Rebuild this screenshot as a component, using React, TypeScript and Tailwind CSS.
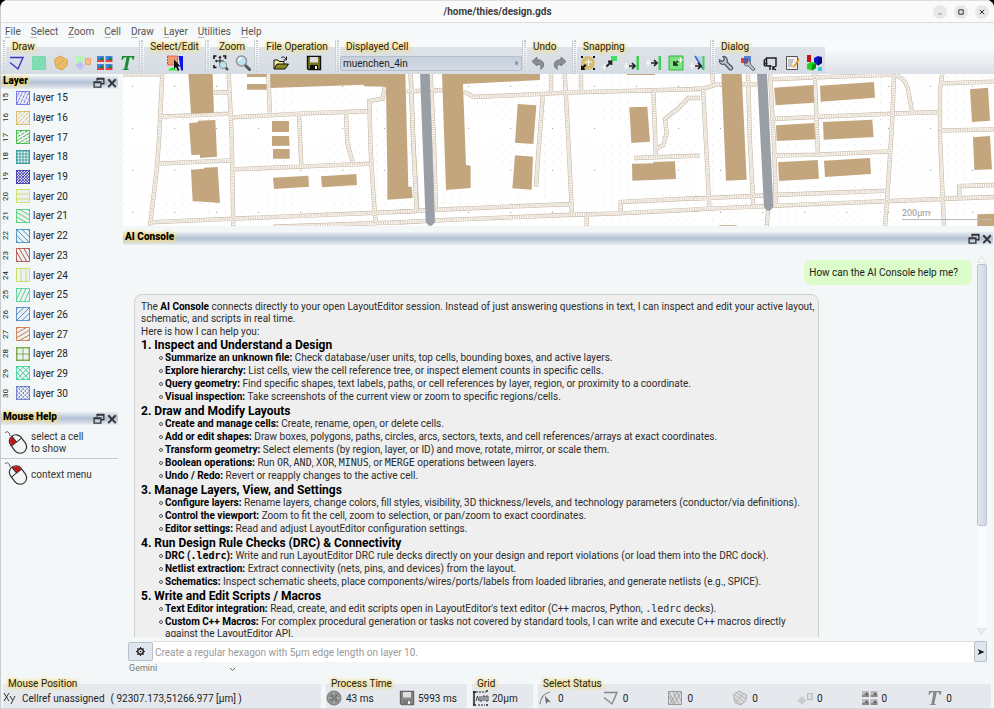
import React from "react";

type Kids = { children?: React.ReactNode };

const GLOW =
  "[text-shadow:0_0_3px_#f5dc82,0_0_4px_#f5dc82,0_0_5px_#f7e6a6,1px_1px_4px_#f5dc82]";

/* ---------- small building blocks ---------- */

function Icon({ children, size = 16 }: Kids & { size?: number }) {
  return (
    <svg width={size} height={size} viewBox="0 0 16 16" fill="none" aria-hidden="true" className="shrink-0">
      {children}
    </svg>
  );
}

function Tool({ label, children, wide = false }: Kids & { label: string; wide?: boolean }) {
  return (
    <button
      type="button"
      aria-label={label}
      className={(wide ? "w-[33px]" : "w-[22px]") + " flex h-[20px] shrink-0 items-center justify-center"}
    >
      {children}
    </button>
  );
}

function ToolGroup({ title, className, center = false, first = false, children }: Kids & { title: string; className: string; center?: boolean; first?: boolean }) {
  return (
    <section className={"flex h-[34px] shrink-0 " + (first ? "pl-[2px] " : "border-l border-[#cdd2d6] pl-[1px] ") + className}>
      <div className="mr-[1px] w-[2px] shrink-0 border-x border-dotted border-[#c5cacf]" />
      <div className="w-full rounded-t-[3px] bg-linear-to-b from-transparent from-[7px] via-[#dde3e8] via-[7px] to-[#d6dce3]">
        <h2 className={"h-[13px] px-[6px] text-[10px] leading-[13px] whitespace-nowrap text-[#222] " + (center ? "text-center " : "") + GLOW}>{title}</h2>
        <div className={"flex h-[20px] " + (center ? "justify-center" : "")}>{children}</div>
      </div>
    </section>
  );
}

function DockHeader({ title }: { title: string }) {
  return (
    <header className="flex h-[13px] shrink-0 items-center justify-between bg-linear-to-b from-[#e9eef3] via-[#b3c1d4] to-[#e9eef3] pl-[2px]">
      <h2 className={"-mt-[4px] text-[10px] leading-[13px] font-black text-black " + GLOW}>{title}</h2>
      <div className="flex gap-[1px]">
        <button type="button" aria-label={"Float " + title} className="h-[12px] w-[12px]">
          <Icon size={12}>
            <path d="M5.500 5V2h9v7h-3M5 2.600h9.500M1.500 6.500h9v7h-9zM1 7.500h9.500" stroke="#333" strokeWidth="1.800" />
          </Icon>
        </button>
        <button type="button" aria-label={"Close " + title} className="h-[12px] w-[12px]">
          <Icon size={12}>
            <path d="M3 3l10 10.500M13 3L3 13.500" stroke="#333" strokeWidth="2.600" />
          </Icon>
        </button>
      </div>
    </header>
  );
}

/* ---------- toolbar drawings ---------- */

const Folder = () => (
  <Icon>
    <path d="M1 14V5h4l1 1.500h5V9" fill="#f5f0a0" stroke="#111" />
    <path d="M1 14L4 9h11.500l-3.500 5z" fill="#8a8a22" stroke="#111" />
    <path d="M8 3c2-2 4-1 5 1.500M13.500 1.500v3.500h-3" stroke="#111" />
  </Icon>
);

const Disk = ({ gray = false }: { gray?: boolean }) => (
  <Icon>
    <path d="M1.500 1.500h13v13h-12l-1-1z" fill={gray ? "#888" : "#77771c"} stroke={gray ? "#666" : "#111"} strokeWidth="1.400" />
    <path d="M4 2h8v5.500H4z" fill={gray ? "#ddd" : "#dcdcdc"} />
    <path d="M4 10h8v4.500H4z" fill={gray ? "#777" : "#111"} />
    <path d="M9 11h2v3H9z" fill="#eee" />
  </Icon>
);

const Lens = () => (
  <Icon>
    <path d="M10 10l4.500 4.500" stroke="#555" strokeWidth="3" strokeLinecap="round" />
    <circle cx="6.500" cy="6" r="5" fill="#bfe3f3" stroke="#8b969c" strokeWidth="1.500" />
    <path d="M3.500 6a3 3 0 013-3" stroke="#fff" strokeWidth="1.500" />
  </Icon>
);

const ZoomArea = () => (
  <Icon>
    <path d="M1 4V1h2.500M10 1h2.500v3M1 10v2.500h2.500" stroke="#111" strokeWidth="1.600" />
    <path d="M7 2v7M3 6h8" stroke="#222" strokeWidth="1.200" />
    <path d="M7 .5L5.200 3h3.600zM1.500 6L4 4.500v3z" fill="#222" />
    <path d="M12 12l3 3" stroke="#555" strokeWidth="2.500" />
    <circle cx="10" cy="10" r="3.600" fill="#bfe3f3" stroke="#8b969c" />
  </Icon>
);

const Select = () => (
  <Icon>
    <path d="M.5 1h10v9H.5z" fill="#f29a70" stroke="#f33" strokeDasharray="2 1" />
    <path d="M1 15.500q4-6 9 0z" fill="#2e3" />
    <path d="M11.500 1H16v14.500h-2z" fill="#11e" />
    <path d="M7 4.500v9.500l2-2 1.800 4 1.700-.8-1.800-3.700h3z" fill="#111" />
  </Icon>
);

const Undo = ({ flip = false }: { flip?: boolean }) => (
  <Icon>
    <g transform={flip ? "matrix(-1 0 0 1 16 0)" : undefined}>
      <path d="M2 6.500L7 2v2.700c4.500 0 7 2.300 6.700 5.300-.2 2-1.200 3.300-3.200 4.300 1-2.800.5-4.800-3.500-4.800V11z" fill="#8c8f92" stroke="#6a6d70" strokeWidth=".8" />
    </g>
  </Icon>
);

const Wrench = ({ badge = false }: { badge?: boolean }) => (
  <Icon>
    {badge && <path d="M1 3h6v5H1z" fill="#e33" />}
    {badge && <path d="M4 1h7v6H4z" fill="#36c" opacity=".8" />}
    <g transform={badge ? "translate(3 3.500) scale(.8)" : undefined}>
      <path d="M5 1.500l1.500 3-2 2-3-1.500C1 8.500 4 10 6.500 9l5 5.500c2 1.500 4-.8 2.700-2.500L9 7c1-3-1-6-4-5.500z" fill="#c4c8d4" stroke="#4c4f5c" strokeWidth="1.200" />
    </g>
  </Icon>
);

const Chip = () => (
  <Icon>
    <path d="M4.500 4C2.500 4 1.500 6 2.500 8c-1 1.500 0 3 1.500 3M4.500 11V3h9.500v8.500M2 8.500h3.500M8 11v-1M8 15v-4h1.500M11 15v-4M14 15l-3-2 3-2M4.500 11H8" stroke="#222" strokeWidth="1.500" />
  </Icon>
);

const Note = () => (
  <Icon>
    <path d="M2.500 1.500h11v13h-11z" fill="#f2f2ee" stroke="#555" />
    <path d="M4 5h6M4 7h5M4 9h4M4 11h5" stroke="#999" />
    <path d="M15 3l-5 7-1 3 2.500-1.500 4-6.500z" fill="#f39a1f" />
  </Icon>
);

const Cubes = () => (
  <Icon>
    <path d="M1 0h4v7H1z" fill="#c11" />
    <path d="M8 3l4-2 4 1v6l-4 2.500L8 8z" fill="#1212c8" />
    <path d="M12 4.500L16 2v6l-4 2.500z" fill="#08087a" />
    <path d="M1 9l4-2 5 1v5l-4 2.500L1 14z" fill="#1fd41f" />
    <path d="M6 10l4-2v5l-4 2.500z" fill="#0a8a0a" />
    <path d="M12 12h4v4h-4z" fill="#3cd" />
  </Icon>
);

const Snap = ({ kind }: { kind: number }) => (
  <Icon>
    {kind === 0 && <circle cx="8" cy="8" r="7" fill="#d2bd72" />}
    {kind === 0 && <path d="M1 1h2v2H1zM13 1h2v2h-2zM13 13h2v2h-2zM1 15v-5l1.500 1.500L5 9l1.500 1.500L4 13l1.500 2z" fill="#111" />}
    {kind === 0 && <path d="M5 7h7M8.500 4v7" stroke="#fff" />}
    {kind === 1 && <path d="M9 1h6v5H9z" fill="#4d6" />}
    {kind === 1 && <path d="M4 12l5-5M6 6.500h3.500V10" stroke="#222" strokeWidth="1.800" />}
    {kind === 1 && <path d="M0 12h5M2.500 9v6" stroke="#fff" />}
    {(kind === 2 || kind === 3) && <path d="M12.500 1h2.500v14h-2.500z" fill="#3dcf55" />}
    {kind === 2 && <path d="M5 11h6M8 8l3 3-3 3" stroke="#222" strokeWidth="1.700" />}
    {kind === 2 && <path d="M0 11h5M2 8v6" stroke="#fff" />}
    {kind === 3 && <path d="M5 8h6M8 5l3 3-3 3" stroke="#222" strokeWidth="1.700" />}
    {kind === 3 && <path d="M0 8h5M2 5v6" stroke="#fff" />}
    {kind === 4 && <path d="M1 1h14v14H1z" fill="#7be37f" stroke="#34b545" />}
    {kind === 4 && <path d="M10 6l-3.500 3.500M6 6v4h4" stroke="#222" strokeWidth="1.700" />}
    {kind === 4 && <path d="M10 5h5M12.500 2.500v5" stroke="#fff" />}
    {kind === 5 && <path d="M5 1h7v12z" fill="#b9d3ee" />}
    {kind === 5 && <path d="M5 1l8 13" stroke="#36c" strokeWidth="1.500" />}
    {kind === 5 && <path d="M12.500 1h2v14h-2z" fill="#3dcf55" />}
    {kind === 5 && <path d="M5 11h6M8 8l3 3-3 3" stroke="#222" strokeWidth="1.700" />}
    {kind === 5 && <path d="M0 11h5M2 8v6" stroke="#fff" />}
  </Icon>
);

const DrawIcon = ({ kind, gray = false }: { kind: number; gray?: boolean }) => (
  <Icon>
    {kind === 0 && <path d="M1 7.500l8 6.500L14 2.500H1" stroke={gray ? "#888" : "#3a34c8"} strokeWidth="1.400" />}
    {kind === 1 && <path d="M1.500 1.500h13v13h-13z" fill={gray ? "#ddd" : "#8be0b8"} stroke={gray ? "#999" : "#78d8ac"} />}
    {kind === 1 && <path d="M2 6l4 8M2 2l6 12M6 2l6 12M10 2l4 9M14 2L7 14M10 2L3 14" stroke={gray ? "#999" : "#6fd4a6"} strokeWidth=".8" />}
    {kind === 2 && <path d="M1.500 4.500L7 1l7.500 4-.5 5.500L9 15l-6-2.500z" fill={gray ? "#ddd" : "#efc06c"} stroke={gray ? "#aaa" : "#d9a04a"} />}
    {kind === 2 && <path d="M3 5l9 7M5 3l9 6M3 9l7 5M12 3L4 12" stroke={gray ? "#aaa" : "#dda654"} strokeWidth=".8" />}
    {kind === 3 && !gray && <path d="M1 1h8v8H1z" fill="#b9f5b5" />}
    {kind === 3 && <path d="M5 6l4.500 4.500L5 15 .5 10.500z" fill={gray ? "#ccc" : "#c2c0f5"} />}
    {kind === 3 && <path d="M10.500 3.500h5v6h-5z" fill={gray ? "#ddd" : "#f6bd8d"} stroke={gray ? "#bbb" : "#eaa56c"} />}
    {kind === 4 &&
      [0, 8.5].map((x) =>
        [1, 9].map((y) => (
          <g key={x + "-" + y}>
            <path d={`M${x} ${y}h7v4H${x}z`} fill={gray ? "#bbb" : "#3f86d8"} />
            <path d={`M${x + 2.5} ${y + 4}l2-3 2.500 3z`} fill={gray ? "#666" : "#157a35"} />
            <path d={`M${x} ${y + 5}h7`} stroke={gray ? "#888" : "#e04040"} strokeWidth="2" />
          </g>
        )),
      )}
    {kind === 5 && (
      <path
        d="M3 1h12.500l-.8 4h-1c0-2-.7-2.700-3-2.700L8.500 13c-.1 1 .3 1.300 1.500 1.400V15H3.500v-.6c1.300-.1 1.800-.4 2-1.400L7.500 2.300C5 2.300 4.300 3 3.500 5h-1z"
        fill={gray ? "#888" : "#1e8a35"}
      />
    )}
  </Icon>
);

/* ---------- layer list ---------- */

type Layer = { n: number; color: string; a: number; b?: number; gap: number; dash?: string };

const LAYERS: Layer[] = [
  { n: 15, color: "#5b5be0", a: 25, gap: 3, dash: "3 1" },
  { n: 16, color: "#d3b04b", a: 45, gap: 3, dash: "3 1" },
  { n: 17, color: "#27b02c", a: 60, gap: 3, dash: "3 1" },
  { n: 18, color: "#2a9797", a: 0, b: 90, gap: 3 },
  { n: 19, color: "#3a2fae", a: 45, b: 135, gap: 2 },
  { n: 20, color: "#cbd84a", a: 90, gap: 5 },
  { n: 21, color: "#3ecb62", a: 120, gap: 4 },
  { n: 22, color: "#2a86b8", a: 135, gap: 4 },
  { n: 23, color: "#a8423a", a: 150, gap: 4 },
  { n: 24, color: "#bddc4f", a: 0, gap: 5 },
  { n: 25, color: "#43cf8a", a: 25, gap: 4 },
  { n: 26, color: "#3a7bc4", a: 45, gap: 4 },
  { n: 27, color: "#c46a3c", a: 60, gap: 4 },
  { n: 28, color: "#6ba13a", a: 0, b: 90, gap: 6 },
  { n: 29, color: "#2fcf92", a: 45, b: 135, gap: 4 },
  { n: 30, color: "#5468c8", a: 45, b: 135, gap: 3, dash: "2 1" },
];

function Swatch({ layer }: { layer: Layer }) {
  const angles = layer.b === undefined ? [layer.a] : [layer.a, layer.b];
  const offsets: number[] = [];
  for (let o = -12; o <= 12; o += layer.gap) offsets.push(o);
  return (
    <svg width="14" height="14" viewBox="0 0 14 14" aria-hidden="true" className="shrink-0 overflow-hidden bg-[#eef1f2]">
      {angles.map((angle) => (
        <g key={angle} transform={`rotate(${angle} 7 7)`} stroke={layer.color} strokeWidth=".8" strokeDasharray={layer.dash}>
          {offsets.map((o) => (
            <path key={o} d={`M${7 + o} -4V18`} />
          ))}
        </g>
      ))}
      <rect x=".5" y=".5" width="13" height="13" fill="none" stroke={layer.color} strokeOpacity=".75" />
    </svg>
  );
}

function Mouse({ right = false }: { right?: boolean }) {
  return (
    <svg width="26" height="26" viewBox="0 0 26 26" fill="none" aria-hidden="true" className="shrink-0">
      <path d="M1 3c2-3 5 0 5 3" stroke="#555" />
      <g transform="rotate(-38 14 14)">
        <rect x="7.500" y="4" width="13" height="20" rx="6.500" fill="#f4f4f4" stroke="#333" strokeWidth="1.200" />
        {right ? (
          <path d="M14 4.500c4 0 6 3 6 7h-6z" fill="#c81414" />
        ) : (
          <path d="M14 4.500c-4 0-6 3-6 7h6z" fill="#c81414" />
        )}
        <path d="M7.500 11.500h13M14 4v7.500" stroke="#333" />
      </g>
    </svg>
  );
}

/* ---------- layout canvas ---------- */

const ROADS_LEFT = [
  "M0 13H130",
  "M127 10L117 210L110 300L90 470",
  "M122 140L330 131",
  "M326 10L335 200L340 470",
  "M282 68L332 66",
  "M445 10L450 135",
  "M335 142L560 130L752 123",
  "M537 132L544 292",
  "M678 125L682 220L700 284",
  "M115 281L335 271",
  "M340 298L560 289L755 281",
  "M795 50L788 86L748 93L752 240L762 400L768 465",
  "M90 457L340 446L560 437L890 423",
  "M460 470L900 455",
  "M872 10L880 220L892 423",
];

const ROADS_MID = [
  "M32 10L40 220L50 425",
  "M92 10L102 220L108 422",
  "M20 64L130 60",
  "M192 65L222 81L380 74L520 67L900 57",
  "M453 10V70M543 10V64M494 10L504 190L516 435",
  "M428 80L415 250L408 350",
  "M0 425L160 417L516 402",
  "M0 457L160 449L500 435L660 430L900 418",
  "M560 430V470",
  "M662 430V396L900 384",
  "M760 60L768 262",
  "M900 84H865L832 118L795 146L800 190L790 225L766 238",
  "M702 264L900 257",
];

const ROADS_RIGHT = [
  "M55 10L57 40M0 57L30 55L70 43L190 43",
  "M27 57L38 255L46 412",
  "M162 10L168 220L178 410",
  "M228 10L240 220L246 408",
  "M230 28L370 22L600 14",
  "M362 10L372 255",
  "M236 147L400 139L598 131L740 126",
  "M242 257L372 254L590 244",
  "M600 12L595 150L582 350L573 470",
  "M602 14Q640 25 645 75L654 126",
  "M745 10L738 60L738 200L750 470",
  "M745 40L900 35",
  "M735 182L900 178",
  "M0 386L240 375L580 362",
  "M0 418L180 410L420 400L740 387L900 381",
  "M796 386V348L900 345",
  "M222 420L218 470",
];

function Roads({ x, paths }: { x: number; paths: string[] }) {
  const d = paths.join("");
  return (
    <g transform={`translate(${x} 70) scale(.33333)`} fill="none">
      <path d={d} stroke="#c9bba8" strokeWidth="13" />
      <path d={d} stroke="#fbf8f4" strokeWidth="9" />
      <path d={d} stroke="#c3b299" strokeWidth="7" strokeDasharray="3 4" opacity=".6" />
    </g>
  );
}

function Canvas() {
  return (
    <div className="h-[152px] shrink-0 overflow-hidden bg-white">
      <svg className="block h-full w-full" viewBox="123 74 871 152" preserveAspectRatio="xMinYMin slice" role="img" aria-label="Layout view">
        <defs>
          <pattern id="grid" x="124" y="77" width="8.400" height="8.400" patternUnits="userSpaceOnUse">
            <rect width="1" height="1" fill="#dcdcdc" />
          </pattern>
          <pattern id="gridMajor" x="132" y="86" width="42" height="42" patternUnits="userSpaceOnUse">
            <rect width="1" height="1" fill="#a5a5a5" />
          </pattern>
        </defs>
        <rect x="123" y="74" width="871" height="152" fill="url(#grid)" />
        <rect x="123" y="74" width="871" height="152" fill="url(#gridMajor)" />
        <Roads x={120} paths={ROADS_LEFT} />
        <Roads x={400} paths={ROADS_MID} />
        <Roads x={694} paths={ROADS_RIGHT} />
        <g fill="#c4a67e">
          <path
            transform="translate(120 70) scale(.33333)"
            d="M205 10H278L282 128L213 131ZM207 160L234 157V152L286 150L291 260L240 264V254L214 255ZM213 299L252 296V293L293 291L300 399L262 396L218 394ZM381 10H440V21H381ZM381 42H440V59H381ZM450 10H856L865 350H875L878 384L802 389V318L798 50L732 49L730 44L452 54ZM456 153H507V186H456ZM456 198H507L509 227L456 228ZM459 237H509V266H459ZM459 323L565 317L567 350L462 357ZM603 319L709 312L711 345L606 352Z"
          />
          <path
            transform="translate(400 70) scale(.33333)"
            d="M126 10H420V30L189 42L198 285L212 287V354L138 360ZM353 102L409 106L400 222L345 218ZM345 256L399 260L395 359L337 355ZM681 10H765V15H681ZM688 112L742 110L750 215L694 219ZM696 281L760 280V276L825 274L828 327L697 332Z"
          />
          <path
            transform="translate(694 70) scale(.33333)"
            d="M82 10H143L158 329L96 332ZM240 53L358 45L361 98L245 106ZM378 47L540 36L543 83L380 95ZM246 166L361 159L364 208L248 213ZM387 156L535 149L539 201L389 209ZM252 277L371 270L375 326L255 333ZM390 272L528 264L531 312L393 321ZM828 58L882 53L888 152L834 156ZM837 202L888 198L894 298L841 300ZM850 433L905 431V470H850ZM76 466H128V470H76Z"
          />
        </g>
        <g fill="#9a9fa6">
          <path transform="translate(400 70) scale(.33333)" d="M60 10H89L105 455Q91 480 77 455Z" />
          <path transform="translate(694 70) scale(.33333)" d="M189 10H219L238 410Q223 435 210 410Z" />
        </g>
        <text x="902" y="216" fontSize="9" fill="#999" fontFamily="Roboto, sans-serif">
          200µm
        </text>
        <path d="M902 219.500h90" stroke="#bbb" />
      </svg>
    </div>
  );
}

/* ---------- AI answer ---------- */

const Mono = ({ children }: Kids) => <code className="font-['DejaVu_Sans_Mono',monospace] text-[10px] leading-none">{children}</code>;

const SECTIONS: { title: string; items: [React.ReactNode, React.ReactNode][] }[] = [
  {
    title: "1. Inspect and Understand a Design",
    items: [
      ["Summarize an unknown file:", "Check database/user units, top cells, bounding boxes, and active layers."],
      ["Explore hierarchy:", "List cells, view the cell reference tree, or inspect element counts in specific cells."],
      ["Query geometry:", "Find specific shapes, text labels, paths, or cell references by layer, region, or proximity to a coordinate."],
      ["Visual inspection:", "Take screenshots of the current view or zoom to specific regions/cells."],
    ],
  },
  {
    title: "2. Draw and Modify Layouts",
    items: [
      ["Create and manage cells:", "Create, rename, open, or delete cells."],
      ["Add or edit shapes:", "Draw boxes, polygons, paths, circles, arcs, sectors, texts, and cell references/arrays at exact coordinates."],
      ["Transform geometry:", "Select elements (by region, layer, or ID) and move, rotate, mirror, or scale them."],
      [
        "Boolean operations:",
        <>
          Run <Mono>OR</Mono>, <Mono>AND</Mono>, <Mono>XOR</Mono>, <Mono>MINUS</Mono>, or <Mono>MERGE</Mono> operations between layers.
        </>,
      ],
      ["Undo / Redo:", "Revert or reapply changes to the active cell."],
    ],
  },
  {
    title: "3. Manage Layers, View, and Settings",
    items: [
      ["Configure layers:", "Rename layers, change colors, fill styles, visibility, 3D thickness/levels, and technology parameters (conductor/via definitions)."],
      ["Control the viewport:", "Zoom to fit the cell, zoom to selection, or pan/zoom to exact coordinates."],
      ["Editor settings:", "Read and adjust LayoutEditor configuration settings."],
    ],
  },
  {
    title: "4. Run Design Rule Checks (DRC) & Connectivity",
    items: [
      [
        <>
          DRC (<Mono>.ledrc</Mono>):
        </>,
        "Write and run LayoutEditor DRC rule decks directly on your design and report violations (or load them into the DRC dock).",
      ],
      ["Netlist extraction:", "Extract connectivity (nets, pins, and devices) from the layout."],
      ["Schematics:", "Inspect schematic sheets, place components/wires/ports/labels from loaded libraries, and generate netlists (e.g., SPICE)."],
    ],
  },
  {
    title: "5. Write and Edit Scripts / Macros",
    items: [
      [
        "Text Editor integration:",
        <>
          Read, create, and edit scripts open in LayoutEditor's text editor (C++ macros, Python, <Mono>.ledrc</Mono> decks).
        </>,
      ],
      [
        "Custom C++ Macros:",
        <>
          For complex procedural generation or tasks not covered by standard tools, I can write and execute C++ macros directly
          <br />
          against the LayoutEditor API.
        </>,
      ],
    ],
  },
];

function Answer() {
  return (
    <article className="ml-[11px] w-[685px] shrink-0 rounded-t-[8px] border border-[#cfcfcf] bg-[#efefef] px-[6px] pt-[6px] text-[10px] whitespace-nowrap text-[#2c2c2c]">
      <p className="leading-[12px]">
        The <b className="text-black">AI Console</b> connects directly to your open LayoutEditor session. Instead of just answering questions in text, I can inspect and edit your active layout,
        <br />
        schematic, and scripts in real time.
      </p>
      <p className="leading-[13px]">Here is how I can help you:</p>
      {SECTIONS.map((s) => (
        <section key={s.title}>
          <h3 className="text-[12px] leading-[14px] font-bold text-black">{s.title}</h3>
          <ul>
            {s.items.map(([head, text], i) => (
              <li key={i} className="flex gap-[2px] pb-px pl-[18px] leading-[12px]">
                <span className="mt-[4px] h-[4px] w-[4px] shrink-0 rounded-full border border-[#555]" />
                <p>
                  <b className="text-black">{head}</b> {text}
                </p>
              </li>
            ))}
          </ul>
        </section>
      ))}
    </article>
  );
}

/* ---------- status bar ---------- */

function StatusGroup({ title, className, children }: Kids & { title: string; className: string }) {
  return (
    <section className={"h-[30px] rounded-[3px] bg-linear-to-b from-transparent from-[6px] via-[#e5e9ee] via-[6px] to-[#e5e9ee] " + className}>
      <h2 className={"h-[12px] px-[5px] text-[10px] leading-[12px] whitespace-nowrap text-[#222] " + GLOW}>{title}</h2>
      <div className="flex h-[16px] items-center text-[10px] whitespace-nowrap text-[#222]">{children}</div>
    </section>
  );
}

const SelectedEdge = () => (
  <Icon>
    <path d="M2 14C3 6 7 3 12 2" stroke="#888" strokeWidth="1.200" />
    <path d="M7 6l1 8 2-2.500 3 1z" fill="#666" />
  </Icon>
);

export default function App() {
  return (
    <div className="h-screen bg-black font-[Roboto,'Liberation_Sans',sans-serif]">
      <div className="flex h-full flex-col overflow-hidden rounded-t-[8px] border-l border-[#c9cccf] bg-[#f3f7f8]">
        <header className="relative flex h-[23px] shrink-0 items-center justify-end gap-[7px] border-y border-[#dedede] bg-[#fafafa] pr-[5px]">
          <h1 className="absolute inset-x-0 text-center text-[10px] leading-[14px] font-bold text-[#3d3d3d]">/home/thies/design.gds</h1>
          {["M5 11h6", "M4.500 4.500h7v7h-7z", "M4.500 4.500l7 7M11.500 4.500l-7 7"].map((d, i) => (
            <button key={d} type="button" aria-label={["Minimize", "Maximize", "Close"][i]} className="relative flex h-[14px] w-[14px] items-center justify-center rounded-full bg-[#e8e8e8]">
              <Icon size={10}>
                <path d={d} stroke={i === 0 ? "#999" : "#333"} strokeWidth="1.600" />
              </Icon>
            </button>
          ))}
        </header>

        <div className="shrink-0 bg-linear-to-b from-[#f5f8f9] via-[#f8fafb] to-[#dce1e7]">
          <nav className="flex h-[17px] items-center gap-[10px] pl-[4px] text-[10px] text-[#555]">
            {["File", "Select", "Zoom", "Cell", "Draw", "Layer", "Utilities", "Help"].map((m) => (
              <button key={m} type="button">
                <span className="underline decoration-[#bbb] underline-offset-2">{m[0]}</span>
                {m.slice(1)}
              </button>
            ))}
          </nav>
          <div className="flex">
            <ToolGroup title="Draw" className="w-[138px]" first>
              {["Path", "Box", "Polygon", "Shapes", "Cell reference", "Text"].map((n, i) => (
                <Tool key={n} label={n}>
                  <DrawIcon kind={i} />
                </Tool>
              ))}
            </ToolGroup>
            <ToolGroup title="Select/Edit" className="w-[66px]" center>
              <Tool label="Select">
                <Select />
              </Tool>
            </ToolGroup>
            <ToolGroup title="Zoom" className="w-[49px]" center>
              <Tool label="Zoom area">
                <ZoomArea />
              </Tool>
              <Tool label="Zoom view">
                <Lens />
              </Tool>
            </ToolGroup>
            <ToolGroup title="File Operation" className="w-[81px]" center>
              <Tool label="Open" wide>
                <Folder />
              </Tool>
              <Tool label="Save" wide>
                <Disk />
              </Tool>
            </ToolGroup>
            <ToolGroup title="Displayed Cell" className="w-[187px]">
              <label className="relative block w-full">
                <select aria-label="Displayed Cell" className="mt-[3px] block h-[15px] w-full appearance-none rounded-[2px] border border-[#b7c0ca] bg-linear-to-b from-[#c6d0dc] to-[#d2dae4] pl-[2px] text-[10px] leading-[12px] text-[#222]">
                  <option>muenchen_4in</option>
                </select>
                <span className="absolute top-[8px] right-[4px] h-[4px] w-[3px] rounded-full bg-[#8698ae]" />
              </label>
            </ToolGroup>
            <ToolGroup title="Undo" className="w-[50px]">
              <Tool label="Undo">
                <Undo />
              </Tool>
              <Tool label="Redo">
                <Undo flip />
              </Tool>
            </ToolGroup>
            <ToolGroup title="Snapping" className="w-[138px]">
              {["Grid", "Vertex", "Edge", "Middle", "Shape", "Crossing"].map((n, i) => (
                <Tool key={n} label={n}>
                  <Snap kind={i} />
                </Tool>
              ))}
            </ToolGroup>
            <ToolGroup title="Dialog" className="w-[114px]">
              <Tool label="Setup">
                <Wrench />
              </Tool>
              <Tool label="Layer setup">
                <Wrench badge />
              </Tool>
              <Tool label="Schematic">
                <Chip />
              </Tool>
              <Tool label="Text editor">
                <Note />
              </Tool>
              <Tool label="3D view">
                <Cubes />
              </Tool>
            </ToolGroup>
          </div>
        </div>

        <div className="flex min-h-0 flex-1">
          <aside className="flex w-[122px] shrink-0 flex-col pr-[5px]">
            <div className="mt-[2px]">
              <DockHeader title="Layer" />
            </div>
            <ul className="mt-[-1px] grid h-[315px] grid-rows-16 text-[10px] text-[#222]">
              {LAYERS.map((l) => (
                <li key={l.n} className="flex items-center">
                  <span className="flex w-[15px] justify-start">
                    <span className="w-[9px] rotate-180 text-center text-[8px] leading-[9px] [writing-mode:vertical-rl]">{l.n}</span>
                  </span>
                  <Swatch layer={l} />
                  <span className="ml-[3px]">layer {l.n}</span>
                </li>
              ))}
            </ul>
            <div className="mt-[9px]">
              <DockHeader title="Mouse Help" />
            </div>
            <div className="flex h-[34px] items-center gap-[1px] border-b border-[#c6c9cb] pt-[2px] pl-[3px] text-[10px] leading-[12px] text-[#333]">
              <Mouse />
              <p>
                select a cell
                <br />
                to show
              </p>
            </div>
            <div className="flex h-[30px] items-center gap-[1px] pl-[3px] text-[10px] text-[#333]">
              <Mouse right />
              <p>context menu</p>
            </div>
          </aside>

          <main className="flex min-w-0 flex-1 flex-col">
            <Canvas />
            <div className="mt-[6px] pr-[1px]">
              <DockHeader title="AI Console" />
            </div>
            <div className="flex min-h-0 flex-1 pr-[7px]">
              <div className="flex min-w-0 flex-1 flex-col overflow-hidden">
                <p className="mt-[15px] mr-[4px] h-[25px] shrink-0 self-end rounded-[7px] bg-[#dcfcc9] pr-[14px] pl-[5px] text-[10px] leading-[25px] text-[#222]">How can the AI Console help me?</p>
                <div className="mt-[9px] shrink-0">
                  <Answer />
                </div>
              </div>
              <div className="flex w-[11px] flex-col items-center">
                <svg width="9" height="8" viewBox="0 0 9 8" className="mt-[10px]" aria-hidden="true">
                  <path d="M4.500 1L8.500 8H.5z" fill="#fafafa" stroke="#d8dcde" strokeWidth=".8" />
                </svg>
                <div className="mt-px flex w-[10px] flex-1 flex-col rounded-[2px] bg-[#f8fafb]">
                  <div className="h-[72%] rounded-[2px] border border-[#bcc5cf] bg-linear-to-r from-[#e3e8ef] to-[#cfd7e1]" />
                </div>
                <svg width="9" height="8" viewBox="0 0 9 8" className="mb-px" aria-hidden="true">
                  <path d="M.5 0h8L4.500 7z" fill="#eceeef" stroke="#d8dcde" strokeWidth=".8" />
                </svg>
              </div>
            </div>
            <form className="mt-[4px] flex h-[21px] shrink-0 pr-[7px] pl-[5px]" onSubmit={(e) => e.preventDefault()}>
              <button type="button" aria-label="Settings" className="my-[1px] flex w-[25px] shrink-0 items-center justify-center rounded-[2px] border border-[#b9c0c8] bg-[#e0e6ed]">
                <Icon size={9}>
                  <circle cx="8" cy="8" r="5" stroke="#222" strokeWidth="2.500" />
                  <circle cx="8" cy="8" r="1.500" fill="#222" />
                  <path d="M8 0v3M8 13v3M0 8h3M13 8h3M2.500 2.500l2 2M11.500 11.500l2 2M13.500 2.500l-2 2M4.500 11.500l-2 2" stroke="#222" strokeWidth="2" />
                </Icon>
              </button>
              <input aria-label="Prompt" placeholder="Create a regular hexagon with 5µm edge length on layer 10." className="min-w-0 flex-1 border-t border-[#dcdfe2] bg-white pl-[2px] text-[10px] outline-none placeholder:text-[#9a9a9a]" />
              <button type="submit" aria-label="Send" className="flex w-[13px] shrink-0 items-center justify-center rounded-[2px] border border-[#b9c0c8] bg-[#e0e6ed]">
                <Icon size={8}>
                  <path d="M1 2l14 6-14 6 4-6z" fill="#111" />
                </Icon>
              </button>
            </form>
            <div className="relative ml-[6px] h-[14px] w-[108px] shrink-0">
              <select aria-label="Model" className="block h-[12px] w-full appearance-none bg-transparent text-[9px] leading-[11px] text-[#777]">
                <option>Gemini</option>
              </select>
              <svg width="7" height="5" viewBox="0 0 7 5" className="absolute top-[5px] right-[1px]" aria-hidden="true">
                <path d="M1 1l2.500 2.500L6 1" stroke="#666" fill="none" />
              </svg>
            </div>
          </main>
        </div>

        <footer className="flex shrink-0 gap-[5px] border-b border-[#d5d8db] pt-[2px] pr-[3px] pl-[2px]">
          <StatusGroup title="Mouse Position" className="w-[318px] shrink-0">
            <svg width="14" height="14" viewBox="0 0 14 14" className="mr-[5px]" fill="none" stroke="#333" aria-hidden="true">
              <path d="M1 2l5 8M6 2L1 10M7 5l2.500 4M12 5l-4 8" />
            </svg>
            <span>Cellref unassigned</span>
            <span className="ml-[6px]">( 92307.173,51266.977 [µm] )</span>
          </StatusGroup>
          <StatusGroup title="Process Time" className="w-[141px] shrink-0">
            <Icon>
              <circle cx="8" cy="8" r="7" fill="#a5a5a5" stroke="#777" />
              <path d="M2 6h12M2 10h12M6 2v12M10 2v12M3 3l10 10M13 3L3 13" stroke="#666" strokeWidth=".7" />
            </Icon>
            <span className="ml-[4px] w-[53px]">43 ms</span>
            <Disk gray />
            <span className="ml-[3px]">5993 ms</span>
          </StatusGroup>
          <StatusGroup title="Grid" className="w-[61px] shrink-0">
            <svg width="17" height="16" viewBox="0 0 17 16" className="mr-[3px]" aria-hidden="true" fill="none" stroke="#222">
              <path d="M2 1v14M14 15h2M14 1h2M1 2h3M1 15h3" strokeWidth="1.500" />
              <path d="M4 2h10M6 15h7" strokeDasharray="2 1" />
              <path d="M4 11l1.500-5L7 11M8 6v5h2V6M11 6h2M12 6v5M14 6h2v5h-2z" strokeWidth=".8" />
            </svg>
            20µm
          </StatusGroup>
          <StatusGroup title="Select Status" className="min-w-0 flex-1">
            <span className="flex w-[65px] items-center gap-[4px]">
              <SelectedEdge />0
            </span>
            {[0, 1, 2, 3, 4, 5].map((k) => (
              <span key={k} className="flex w-[65px] items-center gap-[4px]">
                <DrawIcon kind={k} gray />0
              </span>
            ))}
          </StatusGroup>
        </footer>
      </div>
    </div>
  );
}
